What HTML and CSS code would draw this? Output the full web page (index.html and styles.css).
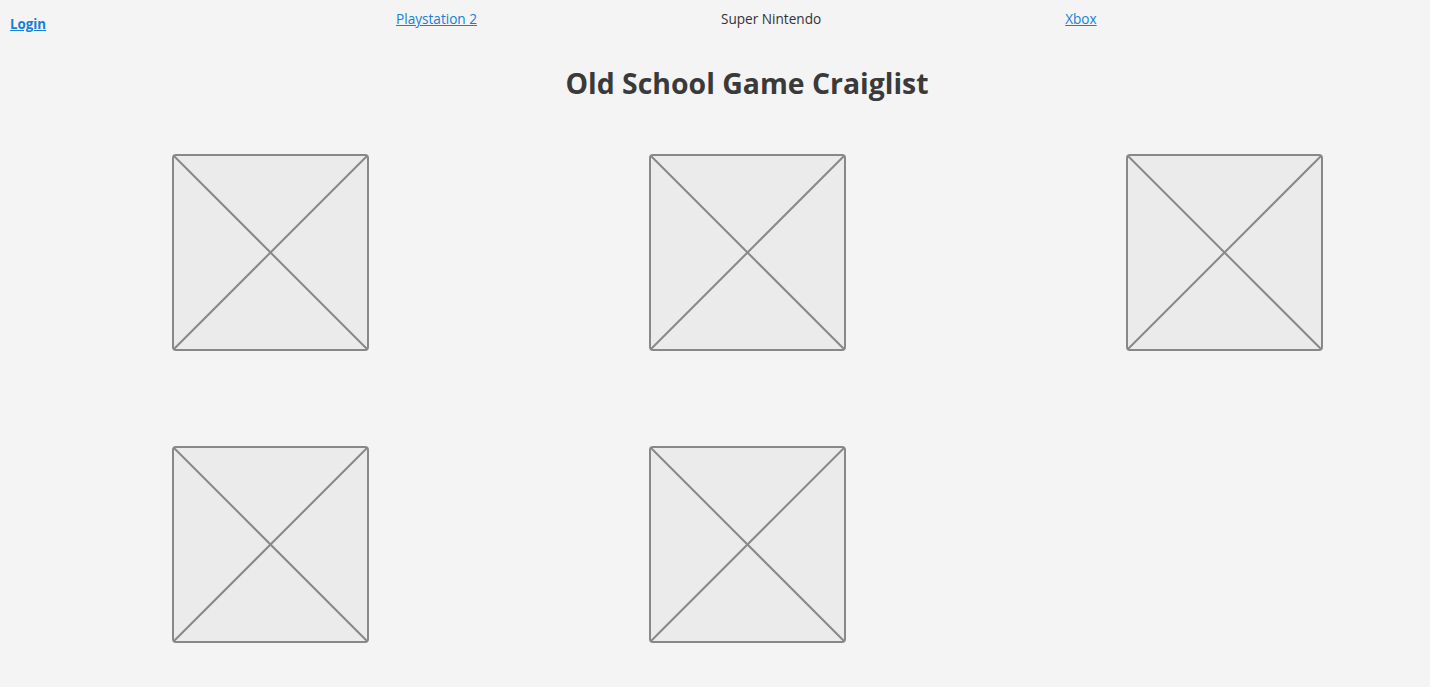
FILE: index.html
```html
<!DOCTYPE html>
<html lang="en">
<head>
<meta charset="utf-8">
<title>Old School Game Craiglist</title>
<link rel="stylesheet" href="styles.css">
</head>
<body>
<header class="topbar">
  <a class="login" href="#">Login</a>
  <nav class="consoles">
    <a class="nav-link" href="#">Playstation 2</a>
    <span class="nav-current">Super Nintendo</span>
    <a class="nav-link" href="#">Xbox</a>
  </nav>
</header>
<h1 class="title">Old School Game Craiglist</h1>
<main class="grid">
  <div class="thumb"><svg viewBox="0 0 197 197" preserveAspectRatio="none"><rect x="1" y="1" width="195" height="195" rx="3" ry="3"/><line x1="2" y1="2" x2="195" y2="195"/><line x1="195" y1="2" x2="2" y2="195"/></svg></div>
  <div class="thumb"><svg viewBox="0 0 197 197" preserveAspectRatio="none"><rect x="1" y="1" width="195" height="195" rx="3" ry="3"/><line x1="2" y1="2" x2="195" y2="195"/><line x1="195" y1="2" x2="2" y2="195"/></svg></div>
  <div class="thumb"><svg viewBox="0 0 197 197" preserveAspectRatio="none"><rect x="1" y="1" width="195" height="195" rx="3" ry="3"/><line x1="2" y1="2" x2="195" y2="195"/><line x1="195" y1="2" x2="2" y2="195"/></svg></div>
  <div class="thumb"><svg viewBox="0 0 197 197" preserveAspectRatio="none"><rect x="1" y="1" width="195" height="195" rx="3" ry="3"/><line x1="2" y1="2" x2="195" y2="195"/><line x1="195" y1="2" x2="2" y2="195"/></svg></div>
  <div class="thumb"><svg viewBox="0 0 197 197" preserveAspectRatio="none"><rect x="1" y="1" width="195" height="195" rx="3" ry="3"/><line x1="2" y1="2" x2="195" y2="195"/><line x1="195" y1="2" x2="2" y2="195"/></svg></div>
</main>
</body>
</html>
```
FILE: styles.css
```css
html, body {
  margin: 0;
  padding: 0;
  background: #f4f4f4;
  font-family: "Open Sans", "Liberation Sans", sans-serif;
  color: #333;
}
.topbar {
  display: flex;
  align-items: flex-start;
  height: 40px;
}
.login {
  margin: 15px 0 0 10px;
  font-size: 13.3px;
  font-weight: 700;
  color: #1580da;
  line-height: 18px;
}
.consoles {
  display: flex;
  gap: 244px;
  margin: 10px 0 0 350px;
  font-size: 13.6px;
  line-height: 18px;
}
.nav-link {
  color: #1580da;
}
.nav-current {
  color: #333;
}
.title {
  margin: 23px 0 0 0;
  text-align: center;
  font-size: 28.4px;
  font-weight: 700;
  line-height: 40px;
  color: #3a3a3a;
  padding-left: 64px;
}
.grid {
  display: grid;
  grid-template-columns: repeat(3, 197px);
  column-gap: 280px;
  row-gap: 95px;
  padding: 51px 0 0 172px;
}
.thumb {
  width: 197px;
  height: 197px;
}
.thumb svg {
  display: block;
  width: 197px;
  height: 197px;
}
.thumb rect {
  fill: #ebebeb;
  stroke: #888;
  stroke-width: 2;
}
.thumb line {
  stroke: #888;
  stroke-width: 2;
}
```
